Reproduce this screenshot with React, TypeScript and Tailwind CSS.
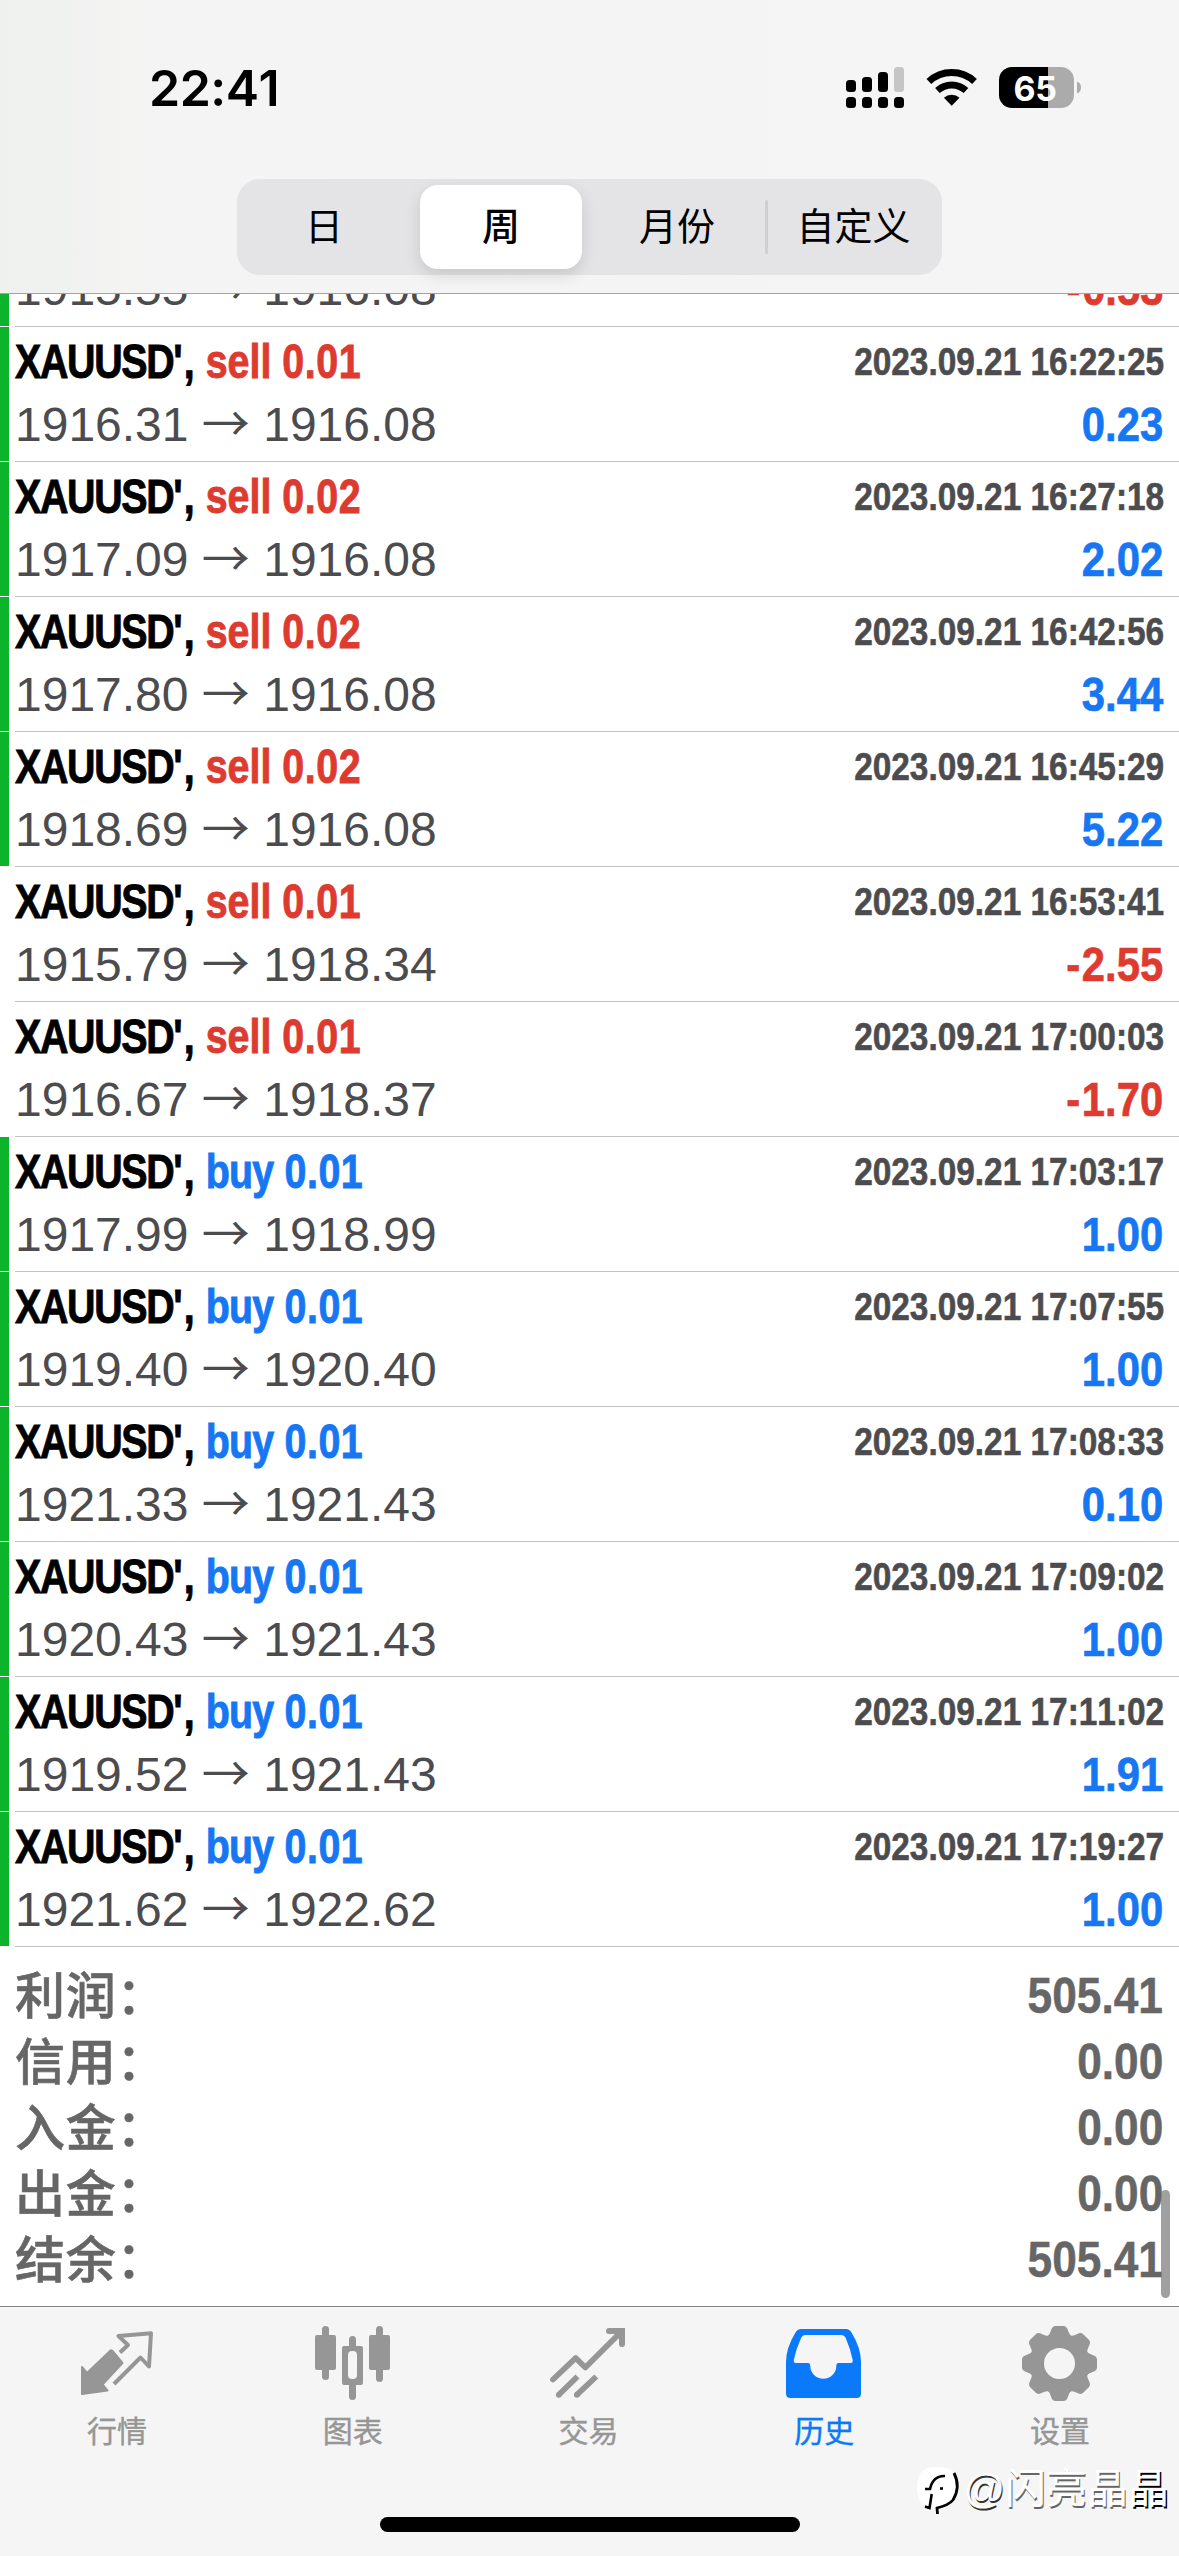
import React from "react";
import clsx from "clsx";

type Deal = {
  side: "buy" | "sell";
  volume: string;
  open: string;
  close: string;
  time: string;
  profit: string;
};

const deals: Deal[] = [
  { side: "sell", volume: "0.01", open: "1916.31", close: "1916.08", time: "2023.09.21 16:22:25", profit: "0.23" },
  { side: "sell", volume: "0.02", open: "1917.09", close: "1916.08", time: "2023.09.21 16:27:18", profit: "2.02" },
  { side: "sell", volume: "0.02", open: "1917.80", close: "1916.08", time: "2023.09.21 16:42:56", profit: "3.44" },
  { side: "sell", volume: "0.02", open: "1918.69", close: "1916.08", time: "2023.09.21 16:45:29", profit: "5.22" },
  { side: "sell", volume: "0.01", open: "1915.79", close: "1918.34", time: "2023.09.21 16:53:41", profit: "-2.55" },
  { side: "sell", volume: "0.01", open: "1916.67", close: "1918.37", time: "2023.09.21 17:00:03", profit: "-1.70" },
  { side: "buy", volume: "0.01", open: "1917.99", close: "1918.99", time: "2023.09.21 17:03:17", profit: "1.00" },
  { side: "buy", volume: "0.01", open: "1919.40", close: "1920.40", time: "2023.09.21 17:07:55", profit: "1.00" },
  { side: "buy", volume: "0.01", open: "1921.33", close: "1921.43", time: "2023.09.21 17:08:33", profit: "0.10" },
  { side: "buy", volume: "0.01", open: "1920.43", close: "1921.43", time: "2023.09.21 17:09:02", profit: "1.00" },
  { side: "buy", volume: "0.01", open: "1919.52", close: "1921.43", time: "2023.09.21 17:11:02", profit: "1.91" },
  { side: "buy", volume: "0.01", open: "1921.62", close: "1922.62", time: "2023.09.21 17:19:27", profit: "1.00" },
];

const totals = [
  { label: "利润：", value: "505.41" },
  { label: "信用：", value: "0.00" },
  { label: "入金：", value: "0.00" },
  { label: "出金：", value: "0.00" },
  { label: "结余：", value: "505.41" },
];

const StatusIcons = () => (
  <svg width="250" height="60" viewBox="0 0 250 60">
    {/* Signal */}
    <rect x="6" y="20" width="10" height="12" rx="3.5" />
    <rect x="22" y="17" width="10" height="15" rx="3.5" />
    <rect x="38" y="12" width="10" height="20" rx="3.5" />
    <rect x="54" y="7" width="10" height="25" rx="3.5" fill="#c5c5c5" />
    {[6, 22, 38, 54].map((x) => (
      <rect key={x} x={x} y="37" width="10" height="11" rx="3.5" />
    ))}
    {/* Wifi */}
    <g fill="none" stroke="#000">
      <path d="M88.9 21.5A33.5 33.5 0 0 1 134.5 21.5" strokeWidth="7" />
      <path d="M97.4 30.6A21 21 0 0 1 126 30.6" strokeWidth="6.8" />
    </g>
    <path d="M111.7 45.7L103.9 37.8A11.5 11.5 0 0 1 119.5 37.8Z" />
    {/* Battery */}
    <path d="M172 7H208V48H172A13 13 0 0 1 159 35V20A13 13 0 0 1 172 7Z" />
    <path d="M208 7H221A13 13 0 0 1 234 20V35A13 13 0 0 1 221 48H208Z" fill="#ababab" />
    <path d="M237 21.5Q241 23 241 27.5T237 33.5Z" fill="#ababab" />
    <text x="195" y="40.5" textAnchor="middle" fill="#fff" className="font-['Inter',sans-serif] text-[34px] font-bold tracking-[-0.5px]">
      65
    </text>
  </svg>
);

const Segments = () => (
  <div className="flex h-24 w-[705px] items-center rounded-[23px] bg-[#e4e4e6] text-[38px] leading-[58px] text-black">
    <div className="w-[174px] text-center">日</div>
    <div className="mr-[7px] ml-[9px] flex h-[84px] w-[162px] items-center justify-center rounded-[18px] bg-white font-medium shadow-[0_6px_16px_rgba(0,0,0,0.13)]">
      周
    </div>
    <div className="w-[176px] text-center">月份</div>
    <div className="h-[54px] w-[3px] rounded-full bg-[#cfcfd2]" />
    <div className="w-[171px] text-center">自定义</div>
  </div>
);

const Prices = ({ open, close }: { open: string; close: string }) => (
  <div className="h-16 text-[#4c4c4f]">
    {open} <span className="font-['Noto_Sans_CJK_SC',sans-serif] leading-none">→</span> {close}
  </div>
);

const Profit = ({ value }: { value: string }) => {
  const lost = value.startsWith("-");
  return (
    <div
      className={clsx(
        "h-16 origin-right scale-x-[0.87] text-right font-bold [-webkit-text-stroke:0.7px]",
        lost ? "text-[#dd3b30]" : "text-[#1777f2]"
      )}
    >
      {lost && <span className="mr-[2px]">-</span>}
      {value.replace("-", "")}
    </div>
  );
};

const DealRow = ({ deal }: { deal: Deal }) => {
  const buy = deal.side === "buy";
  return (
    <div className="flex h-[135px] w-full shrink-0">
      <div className={clsx("mr-[6px] mb-px w-[9px]", !deal.profit.startsWith("-") && "bg-[#0cb42c]")} />
      <div className="flex flex-1 justify-between border-b border-[#c2c2c4] pt-[3px] pr-4 whitespace-nowrap">
        <div>
          <div className="h-[63px] w-[430px] origin-left scale-x-[0.82] font-bold [-webkit-text-stroke:0.9px]">
            <span className="mr-[3px] tracking-[-1.6px]">XAUUSD'</span>,{" "}
            <span className={buy ? "text-[#1777f2]" : "text-[#dd3b30]"}>
              <span className={clsx(buy && "tracking-[-0.9px]")}>{deal.side}</span>{" "}
              <span className="tracking-[0.7px]">{deal.volume}</span>
            </span>
          </div>
          <Prices open={deal.open} close={deal.close} />
        </div>
        <div>
          <div className="-mr-px h-[63px] origin-right scale-x-[0.856] text-right text-[39px] font-bold text-[#4c4c4f] [-webkit-text-stroke:0.6px]">
            {deal.time}
          </div>
          <Profit value={deal.profit} />
        </div>
      </div>
    </div>
  );
};

const QuotesIcon = () => (
  <svg width="84" height="84" viewBox="0 0 84 84" fill="none" stroke="currentColor">
    <path d="M6 46L11 52L34.5 29.5Q35.5 29 36.5 30L46.5 42L26.5 63.5L31.5 69.5L6 73Z" fill="currentColor" strokeWidth="2" strokeLinejoin="round" />
    <path d="M44 31.5L52 24L42.5 15L75 12.2L73 45.5L64.5 36.5L38 63" strokeWidth="4" strokeLinejoin="round" />
  </svg>
);

const ChartIcon = () => (
  <svg width="84" height="84" viewBox="0 0 84 84" fill="currentColor">
    <rect x="3" y="14" width="21" height="35" rx="2" />
    <rect x="10" y="5" width="7" height="54" rx="3.5" />
    <rect x="37" y="15" width="7" height="64" rx="3.5" />
    <rect x="30" y="25" width="21" height="39" rx="2" />
    <rect x="36" y="30" width="9" height="28" rx="4" fill="#f5f5f5" />
    <rect x="57" y="14" width="21" height="35" rx="2" />
    <rect x="64" y="5" width="7" height="56" rx="3.5" />
  </svg>
);

const TradeIcon = () => (
  <svg width="84" height="84" viewBox="0 0 84 84" fill="none" stroke="currentColor" strokeWidth="5.8">
    <path d="M6 58.5L28.7 37L38.3 46.5L74 11" strokeLinecap="round" strokeLinejoin="round" />
    <path d="M62 10H75V23" strokeLinecap="round" strokeWidth="6" />
    <path d="M11.8 73.8L30.5 55.5M29.8 73.8L49.3 55.5" />
    <path d="M11.8 73.8h.01M29.8 73.8h.01" strokeLinecap="round" />
  </svg>
);

const HistoryIcon = () => (
  <svg width="84" height="84" viewBox="0 0 84 84" fill="currentColor">
    <path
      fillRule="evenodd"
      d="M18 8H63Q66.500 8 68.500 11.500Q78 27 78 41V72.500Q78 77 73.500 77H7.500Q3 77 3 72.500V41Q3 27 12.500 11.500Q14.500 8 18 8ZM22 14Q19.500 14 18.300 16.500Q13 28 10.800 39Q10.400 42 13 42H25Q27.300 42 27.300 45A13 12.700 0 0 0 53.300 45Q53.300 42 55.500 42H67.500Q70.200 42 69.700 39Q67.500 28 62.500 16.500Q61.300 14 58.500 14Z"
    />
  </svg>
);

const SettingsIcon = () => (
  <svg width="84" height="84" viewBox="-40.5 -42.5 84 84" fill="currentColor">
    <circle r="30" />
    {[0, 45, 90, 135, 180, 225, 270, 315].map((angle) => (
      <path
        key={angle}
        transform={`rotate(${angle})`}
        d="M-13 -26Q-9.500 -29 -8.500 -33Q-7.300 -37.500 -4 -37.500H4Q7.300 -37.500 8.500 -33Q9.500 -29 13 -26Z"
      />
    ))}
    <circle r="15.500" fill="#f5f5f5" />
  </svg>
);

const tabs = [
  { label: "行情", icon: QuotesIcon },
  { label: "图表", icon: ChartIcon },
  { label: "交易", icon: TradeIcon },
  { label: "历史", icon: HistoryIcon, active: true },
  { label: "设置", icon: SettingsIcon },
];

const Watermark = () => (
  <div className="absolute top-[152px] right-[10px] flex items-center text-[41px] leading-[60px] text-white">
    <svg width="48" height="54" viewBox="0 0 48 54">
      <path d="M4 14Q7 5 21 5Q43 4 43 23Q43 41 24 45L22 50L17 45L7 43Q-1 29 4 14Z" fill="#fff" />
      <g fill="none" stroke="#000" strokeWidth="2.600">
        <path d="M10 27H15Q18 13.500 30 14" />
        <path d="M10 44.500L14.500 46L16.700 32" />
        <path d="M25 26.500h3" />
        <path d="M39 11Q46 25 38 38Q34 43 22 46L22.500 52" strokeWidth="2.800" />
      </g>
    </svg>
    <span className="[text-shadow:1px_1.5px_0_#333]">@</span>
    <span className="[text-shadow:1px_1.5px_0_#666]">闪亮晶</span>
    <span className="[text-shadow:1.5px_1.5px_0_#000]">晶</span>
  </div>
);

const App = () => {
  return (
    <div className="flex h-[2556px] w-[1179px] flex-col overflow-hidden bg-white font-['Liberation_Sans','Noto_Sans_CJK_SC',sans-serif] [font-kerning:none]">
      {/* Header */}
      <header className="flex h-[294px] shrink-0 flex-col items-center border-b border-[#a3a3a3] bg-linear-to-r from-[#eef1ee] via-[#f5f4f4] via-15% to-[#f5f5f6]">
        <div className="flex h-[179px] w-full items-start justify-between pt-[60px] pr-[89px] pl-[149px]">
          <span className="font-['Inter',sans-serif] text-[50px] leading-[56px] font-semibold tracking-[-0.5px]">22:41</span>
          <StatusIcons />
        </div>
        <Segments />
      </header>

      {/* Deals */}
      <main className="relative flex h-[2012px] shrink-0 flex-col text-[48px] leading-[64px]">
        {/* Row scrolled under the header, only the lower part of its prices shows */}
        <div className="flex h-[33px] shrink-0 overflow-hidden">
          <div className="mr-[6px] mb-px w-[9px] bg-[#0cb42c]" />
          <div className="flex flex-1 items-end justify-between border-b border-[#c2c2c4] pr-4 pb-[5px]">
            <Prices open="1915.55" close="1916.08" />
            <Profit value="-0.53" />
          </div>
        </div>
        {deals.map((deal) => (
          <DealRow key={deal.time} deal={deal} />
        ))}
        <div className="flex flex-col pt-4 pr-4 pl-[15px] text-[50px] text-[#666]">
          {totals.map((row) => (
            <div key={row.label} className="flex h-[66px] items-start justify-between">
              <span className="font-['Noto_Sans_CJK_SC',sans-serif] leading-[58px] font-medium tracking-[0.8px] [-webkit-text-stroke:0.6px]">
                {row.label}
              </span>
              <span className="origin-right scale-x-[0.885] leading-[66px] font-bold [-webkit-text-stroke:0.5px]">{row.value}</span>
            </div>
          ))}
        </div>
        {/* Scroll indicator */}
        <div className="absolute right-[9px] bottom-2 h-[108px] w-[9px] rounded-full bg-[#808080]/75" />
      </main>

      {/* Tab bar */}
      <footer className="relative flex h-[250px] shrink-0 flex-col items-center border-t border-[#868686] bg-[#f5f5f5]">
        <nav className="flex w-full flex-1 pt-[14px]">
          {tabs.map(({ label, icon: Icon, active }) => (
            <div key={label} className={clsx("flex flex-1 flex-col items-center", active ? "text-[#0a7afa]" : "text-[#969696]")}>
              <Icon />
              <span className="mt-[5px] mr-[2px] text-[30px] leading-[44px] [-webkit-text-stroke:0.4px]">{label}</span>
            </div>
          ))}
        </nav>
        <div className="mb-6 h-[15px] w-[420px] rounded-full bg-black" />
        <Watermark />
      </footer>
    </div>
  );
};

export default App;
